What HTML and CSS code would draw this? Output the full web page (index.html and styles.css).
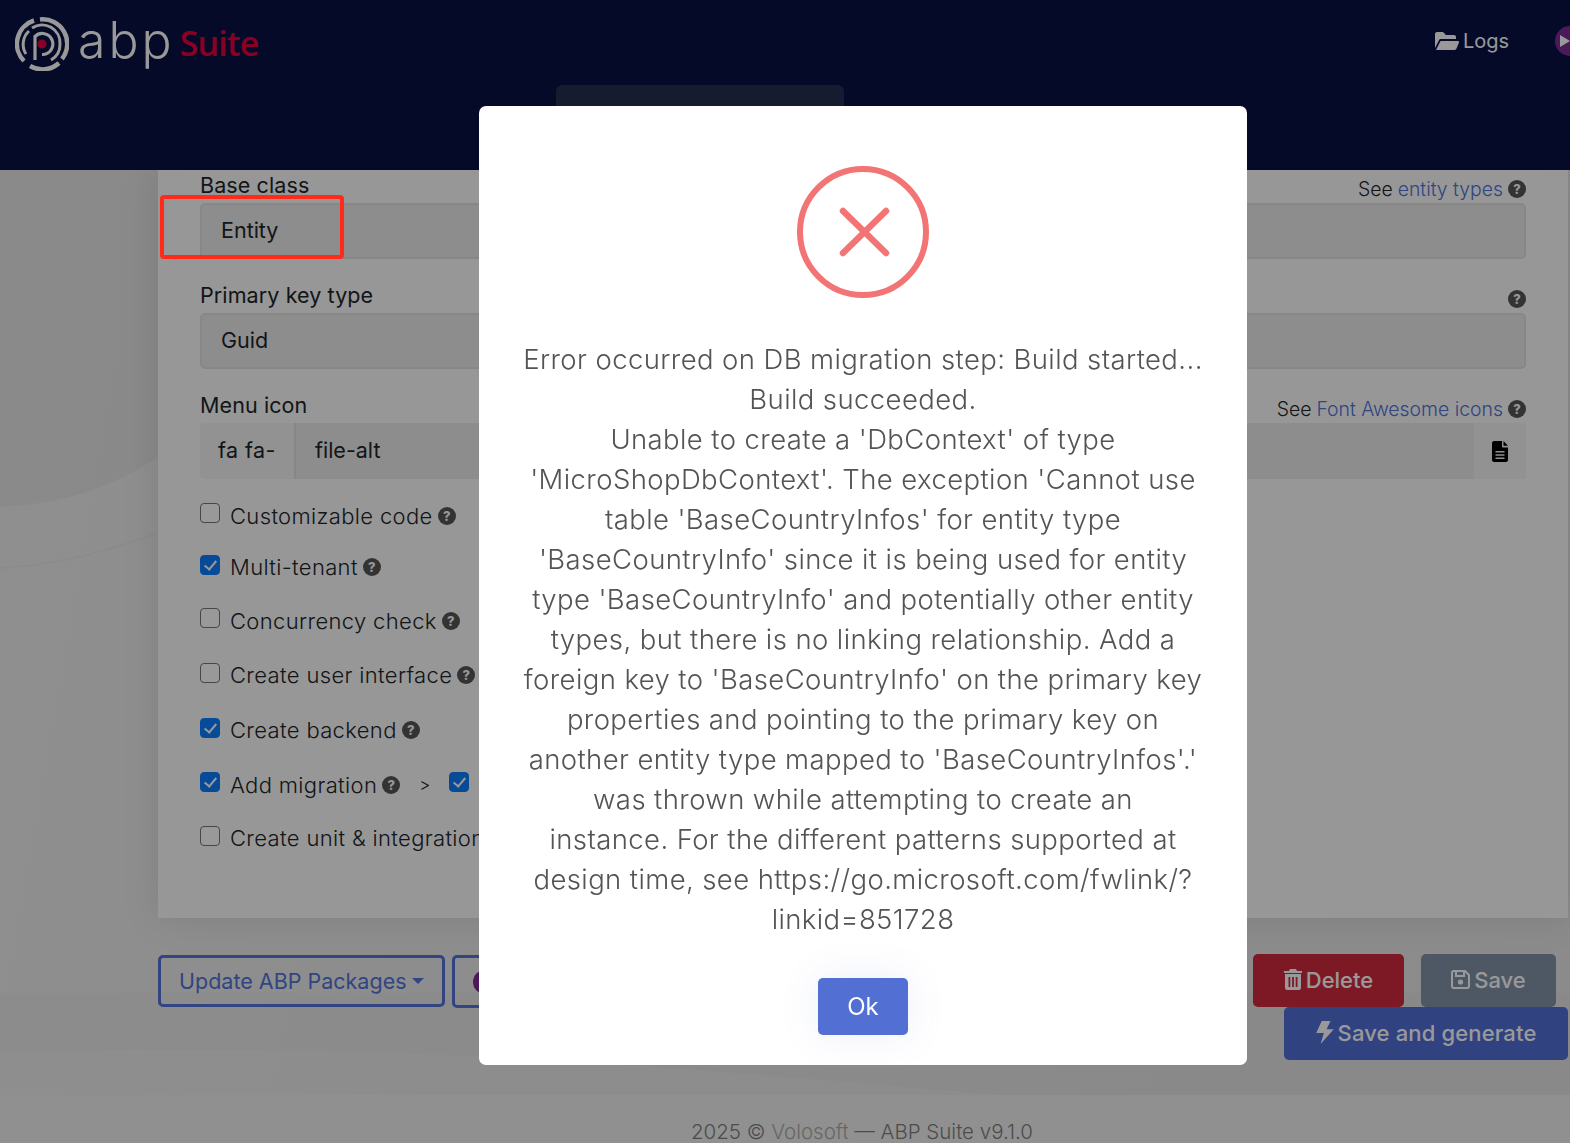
FILE: index.html
```html
<!DOCTYPE html>
<html lang="en">
<head>
    <meta charset="UTF-8">
    <title>ABP Suite</title>
    <link rel="stylesheet" href="styles.css">
</head>
<body>
    <div class="page">
        <header class="topbar">
            <div class="brand">
                <svg class="brand-mark" viewBox="0 0 54 54" width="54" height="54" fill="none" stroke="#fff">
                    <path d="M9 44A24.500 24.500 0 0 1 19 3.500" stroke-width="4.500"/>
                    <path d="M25 2.500A24.500 24.500 0 0 1 47 42" stroke-width="4.500"/>
                    <path d="M44 46A24.500 24.500 0 0 1 15 49" stroke-width="4.500"/>
                    <path d="M11 37A18 18 0 0 1 14 14" stroke-width="3"/>
                    <path d="M17 11A18 18 0 0 1 45 27A18 18 0 0 1 36 43" stroke-width="3"/>
                    <path d="M20 43V19.500A10.500 10.500 0 1 1 27 37.500" stroke-width="3.200"/>
                    <circle cx="27" cy="27" r="4.500" fill="#e6003d" stroke="none"/>
                </svg>
                <span class="brand-abp">abp</span>
                <span class="brand-suite">Suite</span>
            </div>
            <div class="top-links">
                <span class="logs-link">
                    <svg viewBox="0 0 24 18" width="24" height="18" fill="#fff"><path d="M0 16V2C0 1 .8 0 2 0h6l3 3h8c1 0 2 .8 2 2v2H6c-1 0-1.700.5-2 1.300L0 16zM6 9h17c.8 0 1.200.7 1 1.400l-2.500 6.200c-.2.8-.9 1.400-1.800 1.400H1L5 10c.2-.6.500-1 1-1z"/></svg>
                    Logs
                </span>
                <span class="vs-badge">
                    <svg viewBox="0 0 30 30" width="30" height="30"><circle cx="15" cy="15" r="15" fill="#7d2a96"/><path d="M5 9l10 6-10 6zM25 9l-10 6 10 6z" fill="#fff"/></svg>
                </span>
            </div>
            <div class="top-tab"></div>
        </header>

        <main class="content">
            <svg class="backdrop-curves" viewBox="0 0 1570 973" width="1570" height="973" preserveAspectRatio="none">
                <path d="M0 337C60 334 110 320 158 287V0H0z" fill="#000" fill-opacity=".03"/>
                <path d="M0 398C60 395 110 380 158 363" fill="none" stroke="#000" stroke-opacity=".025" stroke-width="2"/>
                <path d="M0 823H1570V925H1000C700 900 400 870 0 883z" fill="#000" fill-opacity=".015"/>
            </svg>
            <section class="card">
                <div class="field">
                    <div class="field-head">
                        <label>Base class</label>
                        <span class="hint">See <a>entity types</a> <i class="help">?</i></span>
                    </div>
                    <div class="input">Entity</div>
                </div>
                <div class="field">
                    <div class="field-head">
                        <label>Primary key type</label>
                        <span class="hint"><i class="help">?</i></span>
                    </div>
                    <div class="input">Guid</div>
                </div>
                <div class="field">
                    <div class="field-head">
                        <label>Menu icon</label>
                        <span class="hint">See <a>Font Awesome icons</a> <i class="help">?</i></span>
                    </div>
                    <div class="input-group">
                        <span class="addon addon-left">fa fa-</span>
                        <span class="input-flat">file-alt</span>
                        <span class="addon addon-right">
                            <svg viewBox="0 0 16 21" width="16" height="21"><path d="M2 0h8v5.500c0 .5.500 1 1 1h5V19c0 1-.9 2-2 2H2c-1 0-2-1-2-2V2C0 1 1 0 2 0zM11.500 0L16 4.800h-4.500zM3.500 10v1.600h9V10zM3.500 13.200v1.600h9v-1.600zM3.500 16.400V18h9v-1.600z" fill="#000" fill-rule="evenodd"/></svg>
                        </span>
                    </div>
                </div>
                <ul class="checks">
                    <li class="check-row row-1"><span class="box"></span>Customizable code <i class="help">?</i></li>
                    <li class="check-row row-2"><span class="box on"></span>Multi-tenant <i class="help">?</i></li>
                    <li class="check-row row-3"><span class="box"></span>Concurrency check <i class="help">?</i></li>
                    <li class="check-row row-4"><span class="box"></span>Create user interface <i class="help">?</i></li>
                    <li class="check-row row-5"><span class="box on"></span>Create backend <i class="help">?</i></li>
                    <li class="check-row row-6"><span class="box on"></span>Add migration <i class="help">?</i><span class="chevron">&gt;</span><span class="box on"></span></li>
                    <li class="check-row row-7"><span class="box"></span>Create unit &amp; integration tests</li>
                </ul>
            </section>

            <div class="actions">
                <div class="actions-left">
                    <button class="btn-outline">Update ABP Packages<span class="caret"></span></button>
                    <button class="btn-outline btn-tall">
                        <svg viewBox="0 0 24 24" width="24" height="24"><circle cx="12" cy="12" r="12" fill="#7d2a96"/></svg>
                        Visual Studio
                    </button>
                </div>
                <div class="actions-right">
                    <button class="btn btn-delete">
                        <svg viewBox="0 0 18 21" width="18" height="21" fill="#fff"><path d="M1 5h16v14c0 1-1 2-2 2H3c-1 0-2-1-2-2zM4.500 8v10h1.800V8zM8.100 8v10h1.800V8zM11.700 8v10h1.800V8zM6 0h6l1 2h5v2H0V2h5z" fill-rule="evenodd"/></svg>
                        Delete
                    </button>
                    <button class="btn btn-save">
                        <svg viewBox="0 0 19 19" width="19" height="19" fill="none" stroke="#fff" stroke-width="2"><path d="M3 1h11l4 4v11c0 1-1 2-2 2H3c-1 0-2-1-2-2V3c0-1 1-2 2-2zM5 1v5h8V1"/><circle cx="9.500" cy="12" r="1.600" fill="#fff"/></svg>
                        Save
                    </button>
                    <button class="btn btn-generate">
                        <svg viewBox="0 0 16 21" width="18" height="23" fill="#fff"><path d="M5 0h8L9.500 7.500H16L4 21l3-10H0z"/></svg>
                        Save and generate
                    </button>
                </div>
            </div>

            <footer class="page-foot">2025 © <a>Volosoft</a> — ABP Suite v9.1.0</footer>
        </main>
    </div>

    <div class="overlay"></div>

    <div class="annotation"></div>

    <div class="modal">
        <svg class="error-icon" viewBox="0 0 132 132" width="132" height="132" fill="none" stroke="#f27474">
            <circle cx="66" cy="66" r="63" stroke-width="6"/>
            <path d="M46 45l43 42M89 45l-43 42" stroke-width="6.500" stroke-linecap="round"/>
        </svg>
        <p class="modal-text">Error occurred on DB migration step: Build started...<br>Build succeeded.<br>Unable to create a 'DbContext' of type<br>'MicroShopDbContext'. The exception 'Cannot use<br>table 'BaseCountryInfos' for entity type<br>'BaseCountryInfo' since it is being used for entity<br>type 'BaseCountryInfo' and potentially other entity<br>types, but there is no linking relationship. Add a<br>foreign key to 'BaseCountryInfo' on the primary key<br>properties and pointing to the primary key on<br>another entity type mapped to 'BaseCountryInfos'.'<br>was thrown while attempting to create an<br>instance. For the different patterns supported at<br>design time, see https://go.microsoft.com/fwlink/?<br>linkid=851728</p>
        <button class="btn-ok">Ok</button>
    </div>
</body>
</html>
```

FILE: styles.css
```css
* {
    margin: 0;
    padding: 0;
    box-sizing: border-box;
}

html, body {
    height: 100%;
    overflow: hidden;
}

body {
    font-family: "Inter", "Liberation Sans", sans-serif;
    color: #212529;
    background: #ebebeb;
}

.page {
    height: 1143px;
    display: flex;
    flex-direction: column;
    overflow: hidden;
}

/* Top bar */
.topbar {
    position: relative;
    height: 170px;
    flex-shrink: 0;
    background: #081244;
    display: flex;
    justify-content: space-between;
    align-items: flex-start;
    padding: 17px 0 0 15px;
    overflow: hidden;
}

.brand {
    display: flex;
    align-items: center;
    color: #fff;
}

.brand-abp {
    font-size: 50px;
    line-height: 54px;
    font-weight: 300;
    letter-spacing: 3px;
    margin-left: 9px;
    margin-top: -8px;
}

.brand-suite {
    font-family: "Open Sans", sans-serif;
    font-size: 34px;
    font-weight: 600;
    color: #e6003d;
    margin-left: 5px;
    margin-top: -2px;
    letter-spacing: -0.8px;
}

.top-links {
    display: flex;
    align-items: center;
    gap: 46px;
    margin-right: -15px;
    padding-top: 9px;
    color: #fff;
    font-size: 20px;
}

.logs-link {
    display: flex;
    align-items: center;
    gap: 4px;
}

.vs-badge {
    display: flex;
}

.top-tab {
    position: absolute;
    left: 556px;
    top: 85px;
    width: 288px;
    height: 40px;
    background: #252f50;
    border-radius: 6px 6px 0 0;
}

/* Form card */
.content {
    position: relative;
    flex: 1;
    padding-left: 158px;
    background: linear-gradient(100deg, #eeeeee, #e8e8e8);
}

.backdrop-curves {
    position: absolute;
    left: 0;
    top: 0;
}

.card {
    position: relative;
    height: 748px;
    margin-right: 2px;
    padding: 0 42px;
    background: #fcfcfc;
    box-shadow: 0 0 36px rgba(0, 20, 20, 0.1);
}

.field {
    height: 110px;
}

.field-head {
    height: 33px;
    display: flex;
    justify-content: space-between;
    align-items: center;
    font-size: 21.5px;
    letter-spacing: .1px;
}

.field-head label {
    margin-top: -4px;
}

.hint {
    display: flex;
    align-items: center;
    gap: 5px;
    margin-top: 5px;
    font-size: 19.400px;
    font-weight: 300;
    letter-spacing: 0;
}

.hint a {
    color: #5173d8;
}

.help {
    display: inline-flex;
    width: 18px;
    height: 18px;
    border-radius: 50%;
    background: #555;
    color: #fcfcfc;
    font-size: 13px;
    font-weight: 800;
    font-style: normal;
    align-items: center;
    justify-content: center;
    letter-spacing: 0;
}

.input {
    height: 56px;
    padding: 0 19px 2px;
    display: flex;
    align-items: center;
    font-size: 21.5px;
    border-radius: 5px;
    background: #ebebeb;
    border: 2px solid #e2e2e2;
}

.input-group {
    display: flex;
    height: 56px;
    font-size: 21.5px;
}

.addon {
    display: flex;
    align-items: center;
    background: #f3f3f3;
}

.addon-left {
    width: 94px;
    padding: 0 0 2px 18px;
    border-radius: 5px 0 0 5px;
    letter-spacing: .4px;
}

.addon-right {
    width: 52px;
    justify-content: center;
}

.input-flat {
    flex: 1;
    display: flex;
    align-items: center;
    padding: 0 0 2px 19px;
    background: #ebebeb;
    border-left: 2px solid #e2e2e2;
}

/* Checkbox list */
.checks {
    list-style: none;
    margin-top: -10px;
    font-size: 22px;
    font-weight: 300;
    letter-spacing: .35px;
}

.check-row {
    height: 54px;
    display: flex;
    align-items: center;
    gap: 5px;
    white-space: nowrap;
}

.row-1 { height: 51px; }
.row-2 { height: 52px; }
.row-3 { height: 55px; }
.row-5 { height: 56px; }
.row-6 { height: 53px; }

.box {
    width: 20px;
    height: 20px;
    margin-right: 5px;
    margin-top: -5px;
    flex-shrink: 0;
    background: #fff;
    border: 1px solid #777;
    border-radius: 4px;
    position: relative;
}

.box.on {
    background: #0d7cfd;
    border-color: #0d7cfd;
}

.box.on::after {
    content: "";
    position: absolute;
    left: 6px;
    top: 2px;
    width: 5px;
    height: 10px;
    border: solid #fff;
    border-width: 0 2.500px 2.500px 0;
    transform: rotate(40deg);
}

.chevron {
    margin: 0 13px 0 14px;
    font-size: 17px;
}

/* Bottom actions */
.actions {
    position: relative;
    display: flex;
    justify-content: space-between;
    padding-top: 36px;
}

.actions-left {
    display: flex;
    align-items: flex-start;
    gap: 7px;
    padding-top: 1px;
}

.btn-outline {
    height: 52px;
    padding: 0 18px;
    display: flex;
    align-items: center;
    gap: 5px;
    font: inherit;
    font-size: 21.500px;
    color: #5173d8;
    background: none;
    border: 3px solid #5173d8;
    border-radius: 5px;
    white-space: nowrap;
}

.btn-tall {
    height: 53px;
}

.caret {
    border-top: 6px solid #5173d8;
    border-left: 6px solid transparent;
    border-right: 6px solid transparent;
}

.actions-right {
    width: 315px;
    display: flex;
    flex-wrap: wrap;
    justify-content: flex-end;
    align-content: flex-start;
    margin-right: 2px;
}

.btn {
    height: 53px;
    padding-bottom: 2px;
    display: flex;
    align-items: center;
    justify-content: center;
    gap: 4px;
    font: inherit;
    font-size: 22px;
    font-weight: 500;
    color: #fff;
    border: none;
    border-radius: 5px;
}

.btn-delete {
    width: 151px;
    background: #d02a3e;
    margin-right: 17px;
}

.btn-save {
    width: 135px;
    background: #8293a8;
    margin-right: 12px;
}

.btn-generate {
    width: 284px;
    background: #536ed8;
    letter-spacing: .15px;
}

.page-foot {
    position: absolute;
    left: 0;
    right: 0;
    top: 925px;
    height: 48px;
    padding: 27px 4px 0 158px;
    line-height: 20px;
    text-align: center;
    font-size: 20.500px;
    font-weight: 300;
    color: #7f7f7f;
    background: #f1f1f1;
}

.page-foot a {
    color: #aaa;
}

/* Modal and backdrop */
.overlay {
    position: fixed;
    inset: 0;
    background: rgba(0, 0, 0, 0.4);
}

.annotation {
    position: fixed;
    left: 160px;
    top: 195px;
    width: 184px;
    height: 64px;
    border: 4px solid #ff2a17;
    border-radius: 4px;
}

.modal {
    position: fixed;
    left: 479px;
    top: 106px;
    width: 768px;
    height: 959px;
    background: #fff;
    border-radius: 7px;
    display: flex;
    flex-direction: column;
    align-items: center;
    padding-top: 60px;
}

.error-icon {
    flex-shrink: 0;
}

.modal-text {
    margin-top: 41px;
    font-size: 27.500px;
    line-height: 40px;
    letter-spacing: .4px;
    font-weight: 350;
    text-align: center;
    white-space: nowrap;
    color: #545454;
}

.btn-ok {
    margin-top: 39px;
    width: 90px;
    height: 57px;
    font: inherit;
    font-size: 24px;
    font-weight: 400;
    color: #fff;
    background: #5270d3;
    border: none;
    border-radius: 5px;
    box-shadow: 0 0 40px rgba(80, 100, 200, 0.1);
}
```
